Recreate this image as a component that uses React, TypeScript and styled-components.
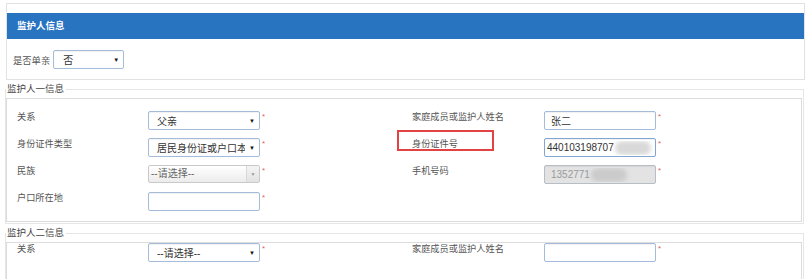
import React from 'react'
import styled, { createGlobalStyle } from 'styled-components'

type FieldProps = {
    disabled?: boolean,
    focused?: boolean
}

const GlobalStyle = createGlobalStyle`
body {
    margin: 0;
    background: #fff;
    font-family: "Liberation Sans", "Noto Sans CJK SC", sans-serif;
}
`

const Page = styled.div`
    padding: 3px 2px 0 5px;
    width: 806px;
    box-sizing: border-box;
`

const Panel = styled.div`
    margin: 0 -1px 0 1px;
    border: 1px solid #e2e2e2;
    padding: 9px 0 10px;
`

const PanelHeader = styled.div`
    background: #2874c1;
    height: 26px;
    line-height: 26px;
    padding-left: 10px;
    color: #fff;
    font-weight: bold;
    font-size: 9.5px;
`

const SingleRow = styled.div`
    display: flex;
    align-items: center;
    gap: 3px;
    padding: 11px 0 0 6px;
    font-size: 9.3px;
    color: #555;
`

const Group = styled.fieldset`
    margin: 3px 0 0;
    padding: 0 1px 1px 0;
    border: 1px solid #e6e6e6;
`

const GroupTitle = styled.legend`
    padding: 0 2px 0 1px;
    margin-left: 0;
    font-size: 9.5px;
    line-height: 12px;
    color: #444;
`

const GroupBody = styled.div<{ padTop: number, padBottom: number }>`
    margin-top: 3px;
    border: 1px solid #dcdcdc;
    padding: ${(p) => p.padTop}px 0 ${(p) => p.padBottom}px 10px;
    display: grid;
    grid-template-columns: 131px 264px 132px 1fr;
    row-gap: 8px;
`

const Label = styled.div`
    position: relative;
    font-size: 9.2px;
    line-height: 12px;
    color: #555;
    align-self: start;
`

const Highlight = styled.div`
    position: absolute;
    left: -15px;
    top: -8px;
    width: 97px;
    height: 21px;
    box-sizing: border-box;
    border: 2px solid #e24242;
`

const Control = styled.div`
    display: flex;
    align-items: flex-start;
`

const Star = styled.span`
    color: #e55a5a;
    font-size: 8px;
    line-height: 1;
    margin: 2px 0 0 2px;
`

const Field = styled.div<FieldProps>`
    position: relative;
    box-sizing: border-box;
    width: 112px;
    height: 19px;
    border: 1px solid ${(p) => (p.disabled ? '#b8bec6' : p.focused ? '#7fa6d6' : '#a4bbd9')};
    border-radius: 2px;
    background: ${(p) => (p.disabled ? '#e3e3e3' : '#fff')};
    box-shadow: inset 0 1px 1px rgba(0, 0, 0, 0.06);
    display: flex;
    align-items: center;
    overflow: hidden;
    font-size: 10px;
    color: ${(p) => (p.disabled ? '#9a9a9a' : '#333')};
    white-space: nowrap;
`

const FieldText = styled.span<{ pad: number }>`
    padding-left: ${(p) => p.pad}px;
    flex: 1;
    overflow: hidden;
`

const Arrow = styled.span`
    width: 14px;
    flex: none;
    text-align: center;
    font-size: 6px;
    color: #111;
`

const ComboBox = styled.div`
    box-sizing: border-box;
    width: 112px;
    height: 18px;
    border: 1px solid #c9c9c9;
    border-radius: 2px;
    background: linear-gradient(#ffffff, #ececec);
    display: flex;
    align-items: stretch;
    font-size: 10px;
    color: #666;
`

const ComboText = styled.span`
    flex: 1;
    padding-left: 2px;
    line-height: 16px;
`

const ComboButton = styled.span`
    width: 12px;
    border-left: 1px solid #d8d8d8;
    background: linear-gradient(#f4f4f4, #e2e2e2);
    font-size: 5px;
    color: #999;
    display: flex;
    align-items: center;
    justify-content: center;
`

const Blur = styled.span<{ tone: string }>`
    display: inline-block;
    width: 36px;
    height: 14px;
    border-radius: 7px;
    background: ${(p) => p.tone};
    filter: blur(2px);
    margin-left: 1px;
    vertical-align: middle;
`

const Select = ({ value, pad = 8, width }: { value: string, pad?: number, width?: number }) => (
    <Field style={width ? { width } : undefined}>
        <FieldText pad={pad}>{value}</FieldText>
        <Arrow>▼</Arrow>
    </Field>
)

const Required = ({ children }: { children: React.ReactNode }) => (
    <Control>
        {children}
        <Star>*</Star>
    </Control>
)

const App = () => {
    return (
        <Page>
            <GlobalStyle />
            <Panel>
                <PanelHeader>监护人信息</PanelHeader>
                <SingleRow>
                    是否单亲
                    <Select value="否" pad={9} width={71} />
                </SingleRow>
            </Panel>

            <Group>
                <GroupTitle>监护人一信息</GroupTitle>
                <GroupBody padTop={12} padBottom={10}>
                    <Label>关系</Label>
                    <Required><Select value="父亲" /></Required>
                    <Label>家庭成员或监护人姓名</Label>
                    <Required>
                        <Field><FieldText pad={6}>张二</FieldText></Field>
                    </Required>

                    <Label>身份证件类型</Label>
                    <Required><Select value="居民身份证或户口本" /></Required>
                    <Label>
                        身份证件号
                        <Highlight />
                    </Label>
                    <Required>
                        <Field focused>
                            <FieldText pad={2}>
                                440103198707<Blur tone="#d9d9d9" />
                            </FieldText>
                        </Field>
                    </Required>

                    <Label>民族</Label>
                    <Required>
                        <ComboBox>
                            <ComboText>--请选择--</ComboText>
                            <ComboButton>▼</ComboButton>
                        </ComboBox>
                    </Required>
                    <Label>手机号码</Label>
                    <Required>
                        <Field disabled>
                            <FieldText pad={6}>
                                1352771<Blur tone="#cbcbcb" />
                            </FieldText>
                        </Field>
                    </Required>

                    <Label>户口所在地</Label>
                    <Required><Field /></Required>
                </GroupBody>
            </Group>

            <Group>
                <GroupTitle>监护人二信息</GroupTitle>
                <GroupBody padTop={0} padBottom={40}>
                    <Label>关系</Label>
                    <Required><Select value="--请选择--" /></Required>
                    <Label>家庭成员或监护人姓名</Label>
                    <Required><Field /></Required>
                </GroupBody>
            </Group>
        </Page>
    )
}

export default App
